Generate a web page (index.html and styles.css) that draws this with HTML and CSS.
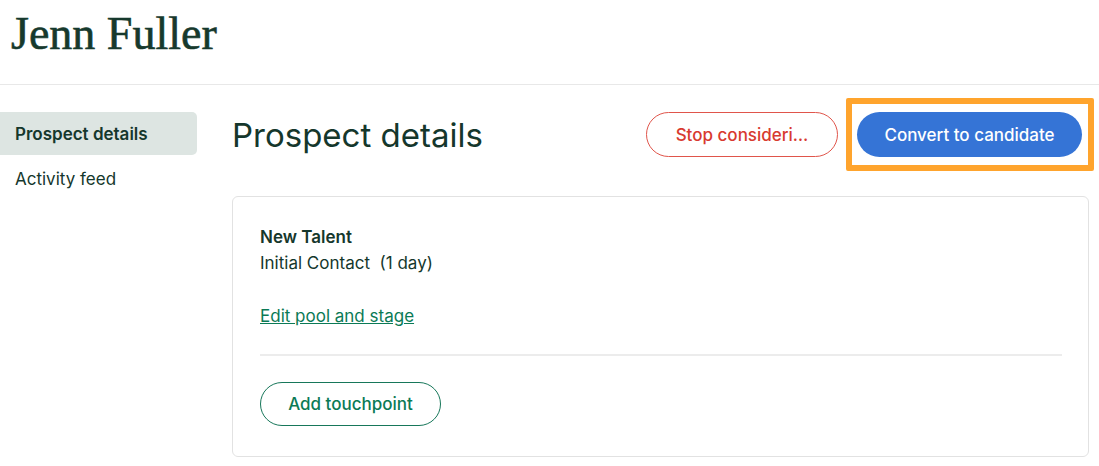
FILE: index.html
```html
<!DOCTYPE html>
<html>
<head>
<meta charset="utf-8">
<link rel="stylesheet" href="styles.css">
</head>
<body>
<header class="page-header">
  <h1 class="person-name">Jenn Fuller</h1>
</header>
<div class="layout">
  <nav class="sidebar">
    <a class="nav-item active">Prospect details</a>
    <a class="nav-item">Activity feed</a>
  </nav>
  <main class="content">
    <div class="content-head">
      <h2 class="section-title">Prospect details</h2>
      <div class="actions">
        <button class="btn btn-danger">Stop consideri…</button>
        <div class="highlight">
          <button class="btn btn-primary">Convert to candidate</button>
        </div>
      </div>
    </div>
    <section class="card">
      <div class="pool-name">New Talent</div>
      <div class="stage">Initial Contact&nbsp; (1 day)</div>
      <a class="link">Edit pool and stage</a>
      <hr class="divider">
      <button class="btn btn-outline">Add touchpoint</button>
    </section>
  </main>
</div>
</body>
</html>
```

FILE: styles.css
```css
* { box-sizing: border-box; }
body {
  margin: 0;
  font-family: Inter, "Liberation Sans", Arial, sans-serif;
  color: #15372c;
  background: #fff;
}
.page-header {
  height: 85px;
  border-bottom: 1px solid #e8e8e8;
  padding: 8px 0 0 11px;
}
.person-name {
  margin: 0;
  font-family: "Liberation Serif", "Times New Roman", serif;
  font-weight: normal;
  font-size: 46px;
  line-height: 52px;
  color: #16392d;
  -webkit-text-stroke: 0.6px #16392d;
}
.layout {
  display: flex;
  padding-top: 27px;
}
.sidebar {
  width: 197px;
  flex: none;
  display: flex;
  flex-direction: column;
  gap: 2px;
}
.nav-item {
  display: block;
  height: 43px;
  line-height: 44px;
  padding-left: 15px;
  font-size: 17px;
  color: #15372c;
  border-radius: 0 5px 5px 0;
}
.nav-item.active {
  background: #dde5e2;
  font-weight: 600;
}
.content {
  margin-left: 35px;
  width: 857px;
}
.content-head {
  display: flex;
  align-items: center;
  justify-content: space-between;
  height: 45px;
}
.section-title {
  margin: 0;
  font-weight: normal;
  font-size: 33px;
  color: #15372c;
}
.actions {
  display: flex;
  align-items: center;
  gap: 19px;
  margin-right: 7px;
}
.btn {
  font-family: Inter, "Liberation Sans", Arial, sans-serif;
  font-size: 17px;
  font-weight: 500;
  height: 45px;
  border-radius: 23px;
  background: #fff;
  cursor: pointer;
}
.btn-danger {
  width: 192px;
  border: 1px solid #e0554b;
  color: #d83a2f;
}
.highlight {
  position: relative;
}
.highlight::after {
  content: "";
  position: absolute;
  left: -11px;
  right: -12px;
  top: -14px;
  bottom: -14px;
  border: 6px solid #ffa42d;
  border-radius: 2px;
  pointer-events: none;
}
.btn-primary {
  width: 225px;
  border: none;
  background: #3574d6;
  color: #fff;
}
.card {
  margin-top: 39px;
  border: 1px solid #e2e2e2;
  border-radius: 6px;
  padding: 27px 26px 28px 27px;
  height: 261px;
}
.pool-name {
  font-size: 17px;
  line-height: 26px;
  font-weight: 600;
}
.stage {
  font-size: 17px;
  line-height: 26px;
}
.link {
  display: inline-block;
  margin-top: 27px;
  font-size: 17px;
  line-height: 26px;
  color: #0b7a56;
  text-decoration: underline;
}
.divider {
  margin: 25px 0 0;
  border: none;
  height: 2px;
  background: #ececec;
}
.btn-outline {
  margin-top: 26px;
  width: 181px;
  height: 44px;
  border: 1px solid #17775a;
  color: #0b7a56;
}
```
